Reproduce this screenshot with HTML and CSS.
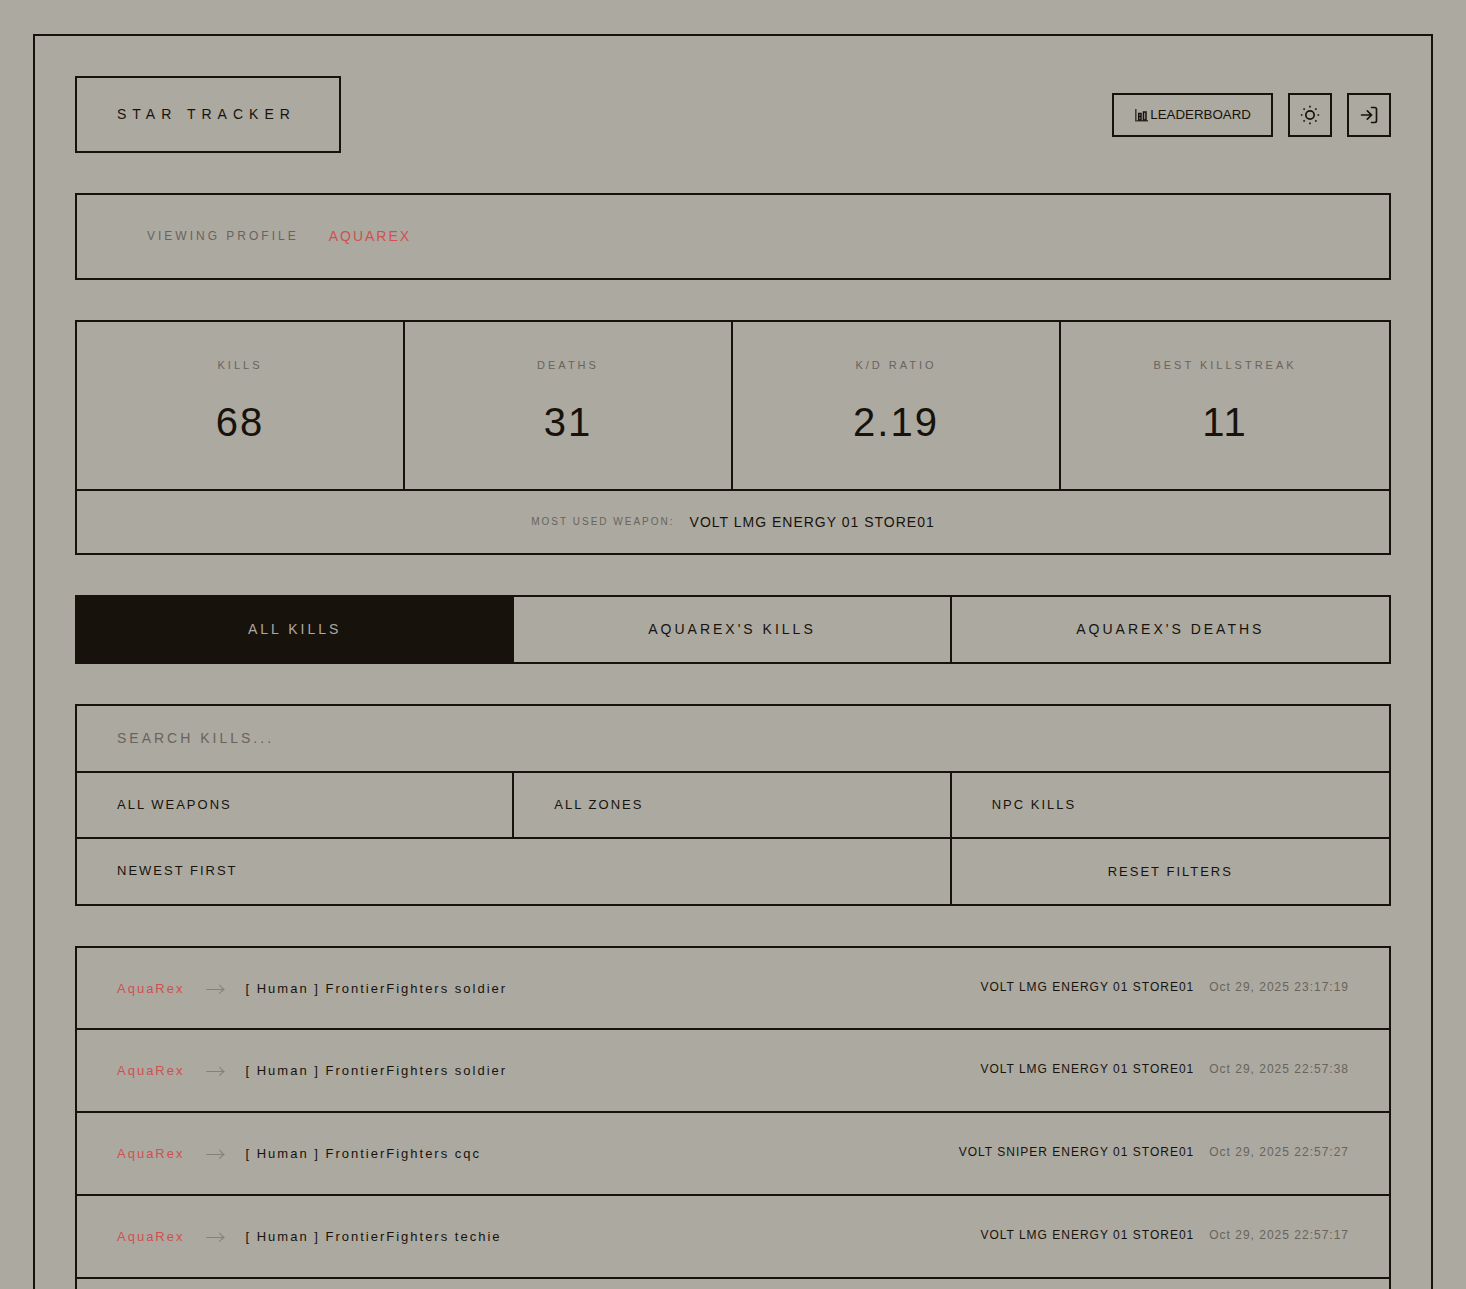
FILE: index.html
```html
<!DOCTYPE html>
<html lang="en">
<head>
<meta charset="utf-8">
<meta name="viewport" content="width=device-width, initial-scale=1">
<title>Star Tracker</title>
<link rel="stylesheet" href="styles.css">
</head>
<body>
<div class="frame">
  <header class="header">
    <h1 class="logo">STAR TRACKER</h1>
    <nav class="actions">
      <button class="btn btn-wide" type="button">
        <svg class="icon-chart" viewBox="0 0 14 14" fill="none" stroke="currentColor" aria-hidden="true"><path d="M1.800 1v11.800H14" stroke-width="1.600" opacity=".7"/><path d="M4.700 5.500h2.300v6.500H4.700zM4.700 8.500h2.300" stroke-width="1.500"/><path d="M9.500 4h2.500v8H9.500z" stroke-width="1.500"/></svg>LEADERBOARD
      </button>
      <button class="btn btn-icon" type="button" aria-label="Toggle theme">
        <svg class="icon" viewBox="0 0 24 24" fill="none" stroke="currentColor" stroke-width="2" aria-hidden="true"><circle cx="12" cy="12" r="5"/><path d="M12 1v2M12 21v2M1 12h2M21 12h2M4.220 4.220l1.420 1.420M18.360 18.360l1.420 1.420M4.220 19.780l1.420-1.420M18.360 5.640l1.420-1.420"/></svg>
      </button>
      <button class="btn btn-icon" type="button" aria-label="Log in">
        <svg class="icon" viewBox="0 0 24 24" fill="none" stroke="currentColor" stroke-width="2" stroke-linecap="round" aria-hidden="true"><path d="M15 3h4a2 2 0 0 1 2 2v14a2 2 0 0 1-2 2h-4M10 17l5-5-5-5M15 12H3"/></svg>
      </button>
    </nav>
  </header>

  <section class="panel profile">
    <span class="profile-label">VIEWING PROFILE</span>
    <span class="profile-name">AQUAREX</span>
  </section>

  <section class="panel">
    <dl class="stats">
      <div class="stat"><dt>KILLS</dt><dd>68</dd></div>
      <div class="stat"><dt>DEATHS</dt><dd>31</dd></div>
      <div class="stat"><dt>K/D RATIO</dt><dd>2.19</dd></div>
      <div class="stat"><dt>BEST KILLSTREAK</dt><dd>11</dd></div>
    </dl>
    <p class="top-weapon"><span class="top-label">MOST USED WEAPON:</span><span class="top-value">VOLT LMG ENERGY 01 STORE01</span></p>
  </section>

  <div class="panel tabs">
    <button class="tab active" type="button">ALL KILLS</button>
    <button class="tab" type="button">AQUAREX'S KILLS</button>
    <button class="tab" type="button">AQUAREX'S DEATHS</button>
  </div>

  <form class="panel filters">
    <input class="search" type="text" placeholder="SEARCH KILLS..." aria-label="Search kills">
    <select class="filter" aria-label="Weapon"><option>ALL WEAPONS</option></select>
    <select class="filter" aria-label="Zone"><option>ALL ZONES</option></select>
    <select class="filter last" aria-label="Kill type"><option>NPC KILLS</option></select>
    <select class="filter sort" aria-label="Sort order"><option>NEWEST FIRST</option></select>
    <button class="reset" type="reset">RESET FILTERS</button>
  </form>

  <ul class="panel kills">
    <li class="kill"><a class="killer" href="#">AquaRex</a><span class="arrow">→</span><span class="victim">[ Human ] FrontierFighters soldier</span><div class="meta"><span class="weapon">VOLT LMG ENERGY 01 STORE01</span><time>Oct 29, 2025 23:17:19</time></div></li>
    <li class="kill"><a class="killer" href="#">AquaRex</a><span class="arrow">→</span><span class="victim">[ Human ] FrontierFighters soldier</span><div class="meta"><span class="weapon">VOLT LMG ENERGY 01 STORE01</span><time>Oct 29, 2025 22:57:38</time></div></li>
    <li class="kill"><a class="killer" href="#">AquaRex</a><span class="arrow">→</span><span class="victim">[ Human ] FrontierFighters cqc</span><div class="meta"><span class="weapon">VOLT SNIPER ENERGY 01 STORE01</span><time>Oct 29, 2025 22:57:27</time></div></li>
    <li class="kill"><a class="killer" href="#">AquaRex</a><span class="arrow">→</span><span class="victim">[ Human ] FrontierFighters techie</span><div class="meta"><span class="weapon">VOLT LMG ENERGY 01 STORE01</span><time>Oct 29, 2025 22:57:17</time></div></li>
  </ul>
</div>
</body>
</html>
```
FILE: styles.css
```css
:root {
  --bg: #aca9a1;
  --ink: #17130c;
  --muted: #68645c;
  --red: #d05050;
  --line: 2px solid var(--ink);
}

* { box-sizing: border-box; }

body {
  margin: 0;
  min-height: 100vh;
  padding: 34px 33px 0;
  display: flex;
  flex-direction: column;
  background: var(--bg);
  color: var(--ink);
  font-family: "Liberation Sans", Arial, sans-serif;
}

button, input, select {
  font-family: inherit;
  color: inherit;
  background: transparent;
  border: 0;
  border-radius: 0;
  margin: 0;
}

.frame {
  flex: 1;
  display: flex;
  flex-direction: column;
  gap: 40px;
  width: 100%;
  max-width: 1400px;
  margin: 0 auto;
  padding: 40px 40px 0;
  border: var(--line);
  border-bottom: 0;
}

.header {
  display: flex;
  align-items: center;
  justify-content: space-between;
}

.logo {
  margin: 0;
  padding: 25px 43px 25px 40px;
  border: var(--line);
  font-size: 14px;
  font-weight: 400;
  line-height: 23px;
  letter-spacing: 6px;
}

.actions { display: flex; gap: 15px; }

.btn {
  height: 44px;
  border: var(--line);
  display: flex;
  align-items: center;
  justify-content: center;
  padding: 0;
}
.btn-wide { padding: 0 20px; gap: 2px; }
.btn-icon { width: 44px; }
.icon { width: 20px; height: 20px; }
.icon-chart { width: 14px; height: 14px; }

.panel { border: var(--line); margin: 0; }

.profile {
  display: flex;
  align-items: center;
  gap: 30px;
  padding: 30px 70px;
  line-height: 23px;
}
.profile-label { font-size: 12px; letter-spacing: 3px; color: var(--muted); }
.profile-name { font-size: 14px; letter-spacing: 2px; color: var(--red); }

.stats {
  display: grid;
  grid-template-columns: repeat(4, 1fr);
  margin: 0;
  border-bottom: var(--line);
}
.stat { padding: 35px 20px; text-align: center; border-right: var(--line); }
.stat:last-child { border-right: 0; }
.stat dt {
  margin-bottom: 17px;
  font-size: 11px;
  line-height: 16px;
  letter-spacing: 3px;
  color: var(--muted);
}
.stat dd { margin: 0; font-size: 40px; line-height: 64px; letter-spacing: 2px; }

.top-weapon {
  display: flex;
  align-items: center;
  justify-content: center;
  gap: 15px;
  margin: 0;
  padding: 20px;
  line-height: 22px;
}
.top-label { font-size: 10px; letter-spacing: 2px; color: var(--muted); }
.top-value { font-size: 14px; letter-spacing: 1px; }

.tabs { display: grid; grid-template-columns: repeat(3, 1fr); }
.tab {
  padding: 20px;
  font-size: 14px;
  line-height: 25px;
  letter-spacing: 3px;
  border-right: var(--line);
}
.tab:last-child { border-right: 0; }
.tab.active { background: var(--ink); color: var(--bg); }

.filters {
  display: grid;
  grid-template-columns: repeat(3, 1fr);
  grid-template-rows: 67px 66px 65px;
}
.search, .filter { padding: 0 40px 2px; outline: 0; }
.search {
  grid-column: 1 / -1;
  font-size: 14px;
  letter-spacing: 3px;
  border-bottom: var(--line);
}
.search::placeholder { color: var(--muted); opacity: 1; }
.filter {
  appearance: none;
  font-size: 13px;
  letter-spacing: 2px;
  border-right: var(--line);
  border-bottom: var(--line);
}
.filter.last { border-right: 0; }
.filter.sort { grid-column: span 2; border-bottom: 0; }
.reset { font-size: 13px; letter-spacing: 2px; }

.kills { flex: 1; padding: 0; list-style: none; border-bottom: 0; }
.kill {
  display: flex;
  align-items: center;
  padding: 30px 40px;
  line-height: 21px;
  border-bottom: var(--line);
  font-size: 13px;
  letter-spacing: 2px;
}
.kill:first-child { padding-bottom: 29px; }
.killer { color: var(--red); text-decoration: none; }
.arrow {
  margin: 0 18px 0 21px;
  color: #858178;
  font-family: "Noto Sans CJK JP", sans-serif;
  font-size: 20px;
  font-weight: 300;
}
.victim { flex: 1; }
.meta {
  display: flex;
  gap: 15px;
  padding-bottom: 2px;
  font-size: 12px;
  line-height: 19px;
  letter-spacing: 1px;
}
.meta time { color: var(--muted); }
```
